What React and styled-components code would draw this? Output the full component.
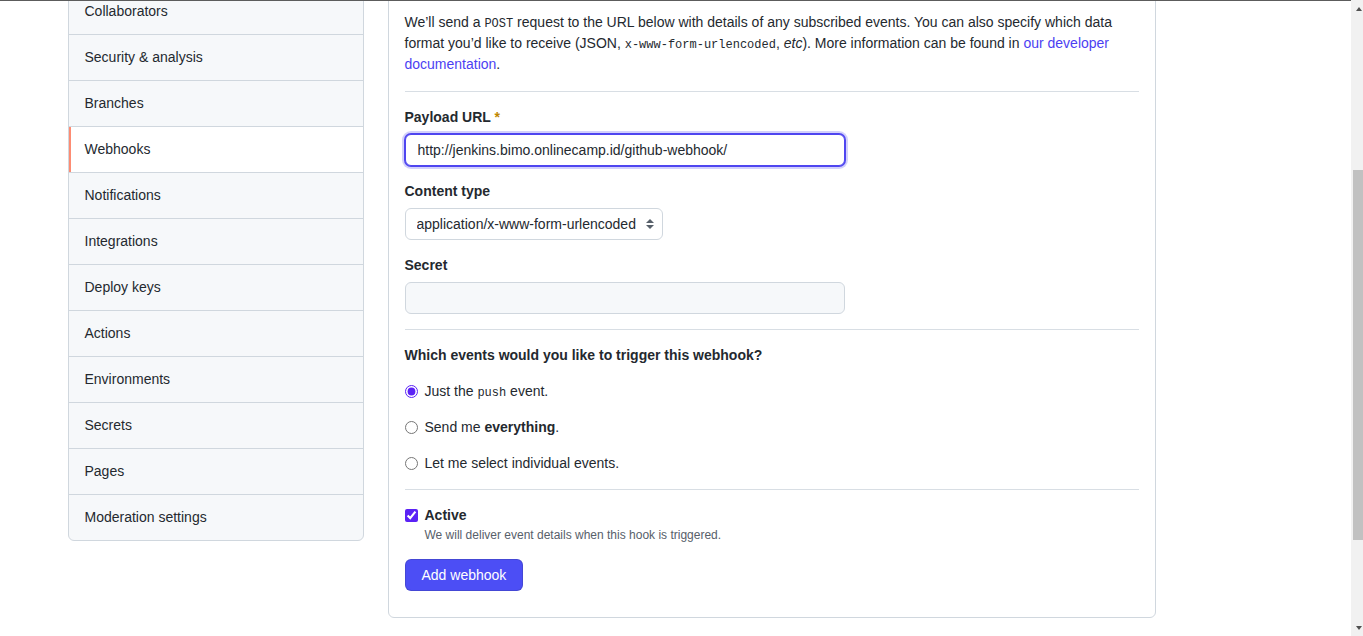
import styled, { createGlobalStyle } from "styled-components";

const GlobalStyle = createGlobalStyle`
  html, body {
    margin: 0;
    height: 100%;
    overflow: hidden;
    background: #ffffff;
  }
  body {
    font-family: "Liberation Sans", Arial, sans-serif;
    font-size: 14px;
    line-height: 1.5;
    color: #24292f;
  }
  * { box-sizing: border-box; }
`;

const Window = styled.div`
  display: flex;
  height: 100vh;
`;

const Page = styled.main`
  flex: 1;
  overflow: hidden;
  border-top: 1px solid #5c5c5c;
`;

const Container = styled.div`
  max-width: 1280px;
  margin: -13px auto 0;
  padding: 0 32px;
  display: flex;
  align-items: flex-start;
  gap: 24px;
`;

const SideNav = styled.nav`
  width: 296px;
  flex-shrink: 0;
  background: #f6f8fa;
  border: 1px solid #d0d7de;
  border-radius: 6px;
  overflow: hidden;
`;

const NavItem = styled.a`
  display: block;
  padding: 12px 16px;
  height: 46px;
  color: #24292f;
  text-decoration: none;
  border-bottom: 1px solid #d0d7de;
  background: ${(p) => (p.$selected ? "#ffffff" : "transparent")};
  box-shadow: ${(p) => (p.$selected ? "inset 2px 0 0 #fd8c73" : "none")};

  &:last-child {
    border-bottom: none;
    height: 45px;
  }
`;

const Card = styled.section`
  width: 768px;
  flex-shrink: 0;
  border: 1px solid #d0d7de;
  border-radius: 6px;
  padding: 22.5px 16px 26.5px;
  display: flex;
  flex-direction: column;
`;

const Intro = styled.p`
  margin: 0 0 16px;
`;

const Code = styled.code`
  font-family: "Liberation Mono", "DejaVu Sans Mono", monospace;
  font-size: 12px;
  line-height: 1;
`;

const Link = styled.a`
  color: #4c3ff2;
  text-decoration: none;
`;

const Divider = styled.hr`
  margin: 0 0 15px;
  border: 0;
  border-top: 1px solid #d8dee4;
  height: 0;
`;

const Field = styled.div`
  display: flex;
  flex-direction: column;
  align-items: flex-start;
  gap: 6px;
  margin-bottom: 15px;
`;

const Label = styled.label`
  font-weight: 700;
  line-height: 21px;
`;

const Required = styled.span`
  color: #bf8700;
`;

const TextInput = styled.input`
  width: 440px;
  height: 32px;
  padding: 5px 12px;
  font-family: "Liberation Sans", Arial, sans-serif;
  font-size: 14px;
  color: #24292f;
  background: ${(p) => (p.$muted ? "#f6f8fa" : "#ffffff")};
  border: 1px solid ${(p) => (p.$focused ? "#4f46f0" : "#d0d7de")};
  border-radius: 6px;
  outline: none;
  box-shadow: ${(p) =>
    p.$focused ? "0 0 0 1px #4f46f0, 0 0 0 3px rgba(79,70,240,0.25)" : "none"};
`;

const SelectWrap = styled.div`
  position: relative;
  width: 258px;
`;

const Select = styled.select`
  appearance: none;
  width: 100%;
  height: 32px;
  padding: 5px 24px 5px 11px;
  font-family: "Liberation Sans", Arial, sans-serif;
  font-size: 14px;
  color: #24292f;
  background: #ffffff;
  border: 1px solid #d0d7de;
  border-radius: 6px;
  outline: none;
`;

const SelectArrow = styled.svg`
  position: absolute;
  right: 9px;
  top: 11px;
  pointer-events: none;
`;

const Heading = styled.h4`
  margin: 0 0 15px;
  font-size: 14px;
  font-weight: 700;
  line-height: 21px;
`;

const Option = styled.label`
  display: flex;
  align-items: center;
  gap: 7px;
  line-height: 21px;
  margin-bottom: 15px;

  & input {
    margin: 0;
    width: 13px;
    height: 13px;
    accent-color: #5b22f5;
  }
`;

const Strong = styled.strong`
  font-weight: 700;
`;

const CheckRow = styled.div`
  display: flex;
  align-items: center;
  gap: 7px;
  font-weight: 700;
  line-height: 21px;

  & input {
    margin: 0;
    width: 13px;
    height: 13px;
    accent-color: #5b22f5;
  }
`;

const Note = styled.p`
  margin: 0 0 15px 20px;
  font-size: 12px;
  line-height: 18px;
  color: #57606a;
`;

const PrimaryButton = styled.button`
  align-self: flex-start;
  height: 32px;
  padding: 0 16px;
  font-family: "Liberation Sans", Arial, sans-serif;
  font-size: 14px;
  color: #ffffff;
  background: #4c4ef5;
  border: 1px solid rgba(27, 31, 36, 0.15);
  border-radius: 6px;
`;

const Rail = styled.div`
  width: 12px;
  flex-shrink: 0;
  background: #f1f1f1;
  display: flex;
  flex-direction: column;
`;

const RailButton = styled.div`
  height: 17px;
  display: flex;
  align-items: center;
  justify-content: flex-end;
  padding-right: 1px;

  &::before {
    content: "";
    border-left: 3.5px solid transparent;
    border-right: 3.5px solid transparent;
    ${(p) =>
      p.$down
        ? "border-top: 4px solid #505050;"
        : "border-bottom: 4px solid #505050;"}
  }
`;

const Track = styled.div`
  flex: 1;
  padding: 153px 0 0 2px;
`;

const Thumb = styled.div`
  height: 370px;
  background: #c1c1c1;
`;

const navItems = [
  "Collaborators",
  "Security & analysis",
  "Branches",
  "Webhooks",
  "Notifications",
  "Integrations",
  "Deploy keys",
  "Actions",
  "Environments",
  "Secrets",
  "Pages",
  "Moderation settings",
];

export default function App() {
  return (
    <>
      <GlobalStyle />
      <Window>
        <Page>
          <Container>
            <SideNav>
              {navItems.map((item) => (
                <NavItem key={item} href="#" $selected={item === "Webhooks"}>
                  {item}
                </NavItem>
              ))}
            </SideNav>

            <Card>
              <Intro>
                We’ll send a <Code>POST</Code> request to the URL below with
                details of any subscribed events. You can also specify which
                data format you’d like to receive (JSON,{" "}
                <Code>x-www-form-urlencoded</Code>, <em>etc</em>). More
                information can be found in{" "}
                <Link href="#">our developer documentation</Link>.
              </Intro>
              <Divider />

              <Field>
                <Label>
                  Payload URL <Required>*</Required>
                </Label>
                <TextInput
                  $focused
                  spellCheck
                  defaultValue="http://jenkins.bimo.onlinecamp.id/github-webhook/"
                />
              </Field>

              <Field>
                <Label>Content type</Label>
                <SelectWrap>
                  <Select defaultValue="form">
                    <option value="form">application/x-www-form-urlencoded</option>
                    <option value="json">application/json</option>
                  </Select>
                  <SelectArrow width="8" height="10" viewBox="0 0 8 10">
                    <path d="M4 0 L8 4 H0 Z M4 10 L0 6 H8 Z" fill="#57606a" />
                  </SelectArrow>
                </SelectWrap>
              </Field>

              <Field>
                <Label>Secret</Label>
                <TextInput $muted />
              </Field>

              <Divider />

              <Heading>Which events would you like to trigger this webhook?</Heading>
              <Option>
                <input type="radio" name="events" defaultChecked />
                <span>
                  Just the <Code>push</Code> event.
                </span>
              </Option>
              <Option>
                <input type="radio" name="events" />
                <span>
                  Send me <Strong>everything</Strong>.
                </span>
              </Option>
              <Option>
                <input type="radio" name="events" />
                <span>Let me select individual events.</span>
              </Option>

              <Divider />

              <CheckRow>
                <input type="checkbox" defaultChecked />
                <span>Active</span>
              </CheckRow>
              <Note>We will deliver event details when this hook is triggered.</Note>

              <PrimaryButton>Add webhook</PrimaryButton>
            </Card>
          </Container>
        </Page>

        <Rail>
          <RailButton />
          <Track>
            <Thumb />
          </Track>
          <RailButton $down />
        </Rail>
      </Window>
    </>
  );
}
